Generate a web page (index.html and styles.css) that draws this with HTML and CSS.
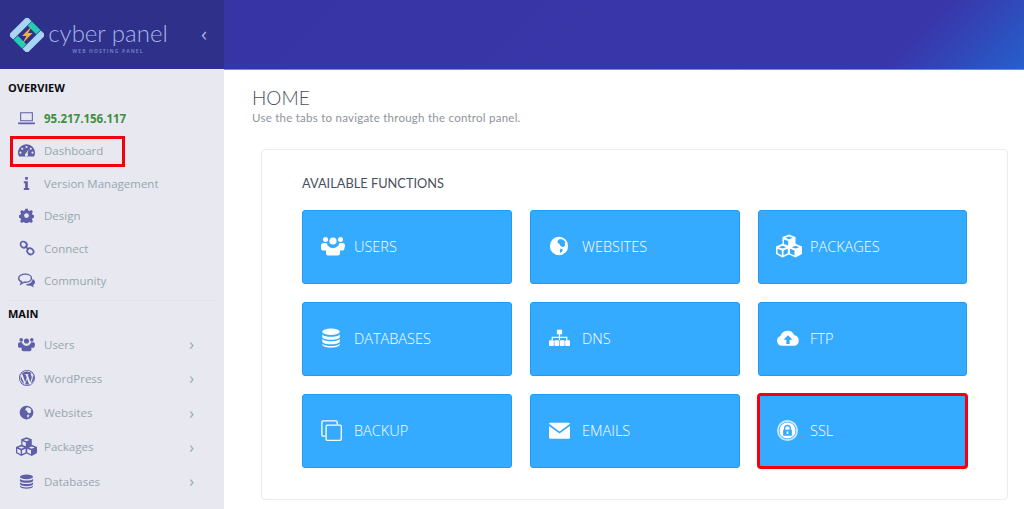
FILE: index.html
```html
<!DOCTYPE html>
<html lang="en">
<head>
<meta charset="utf-8">
<title>CyberPanel</title>
<link rel="stylesheet" href="styles.css">
</head>
<body>
<svg class="defs" width="0" height="0" aria-hidden="true">
  <defs>
    <symbol id="i-laptop" viewBox="0 0 24 20"><path fill-rule="evenodd" d="M3 1h18v13H3zM4.500 2.500v10h15v-10zM0 15.500h24v1.200q0 1.300-1.500 1.300h-21q-1.500 0-1.500-1.300z"/></symbol>
    <symbol id="i-gauge" viewBox="0 0 24 20"><path fill-rule="evenodd" d="M12 1C5.400 1 0 6.300 0 13q0 3 1.500 5.500h21Q24 16 24 13C24 6.300 18.600 1 12 1zM12 3.500a1.500 1.500 0 1 1 0 3 1.500 1.500 0 0 1 0-3zM6 6a1.500 1.500 0 1 1 0 3 1.500 1.500 0 0 1 0-3zM18 6a1.500 1.500 0 1 1 0 3 1.500 1.500 0 0 1 0-3zM3.500 11.500a1.500 1.500 0 1 1 0 3 1.500 1.500 0 0 1 0-3zM20.500 11.500a1.500 1.500 0 1 1 0 3 1.500 1.500 0 0 1 0-3zM15 8.500l-1.500 5.800a2.200 2.200 0 1 1-2.200-.5z"/></symbol>
    <symbol id="i-info" viewBox="0 0 24 24"><path d="M9.500 0h5v5h-5zM7 8h7.500v12.500H17V24H7v-3.500h2.500V11.500H7z"/></symbol>
    <symbol id="i-gear" viewBox="0 0 24 24"><path fill-rule="evenodd" d="M10 1h4l.7 3 2.200.9 2.600-1.600 2.800 2.800-1.600 2.600.9 2.200 3 .7v4l-3 .7-.9 2.200 1.600 2.600-2.800 2.800-2.600-1.600-2.200.9-.7 3h-4l-.7-3-2.200-.9-2.600 1.600-2.800-2.800 1.600-2.600-.9-2.200-3-.7v-4l3-.7.9-2.200-1.600-2.600 2.800-2.800 2.600 1.600 2.200-.9zM12 8.200a3.800 3.800 0 1 0 0 7.600 3.800 3.800 0 0 0 0-7.600z"/></symbol>
    <symbol id="i-link" viewBox="0 0 24 24"><g fill="none" stroke="currentColor" stroke-width="2.600"><ellipse cx="7" cy="7" rx="5" ry="4.300" transform="rotate(40 7 7)"/><ellipse cx="17" cy="17" rx="5" ry="4.300" transform="rotate(40 17 17)"/><path d="M9 9l5.500 5.500"/></g></symbol>
    <symbol id="i-chat" viewBox="0 0 24 22"><g fill="none" stroke="currentColor" stroke-width="2"><path d="M10 2c5 0 9 2.400 9 5.700s-4 5.800-9 5.800l-1.500-.1L4 16l1-3.300C2.500 11.700 1 10 1 7.700 1 4.400 5 2 10 2z"/></g><path d="M20.500 9c2 1 3.500 2.600 3.500 4.500 0 1.600-1 3-2.700 4l.9 3.500-5-2.800q-4 .3-6.700-1.700c5 0 10-2.500 10-7.500z"/></symbol>
    <symbol id="i-users" viewBox="0 0 24 20"><circle cx="12" cy="5" r="3.600"/><circle cx="4.500" cy="3.500" r="2.500"/><circle cx="19.500" cy="3.500" r="2.500"/><path d="M0 10q0-3 2.500-3h3q1 3 3 4-3 1-3.500 3.500H1.500Q0 14 0 12zM24 10q0-3-2.500-3h-3q-1 3-3 4 3 1 3.500 3.500h3q1.500-.5 1.500-2.500z"/><path d="M7.500 10.500q2 1.500 4.500 1.500t4.500-1.500q2.500.5 2.500 4V17q0 2.500-2.500 2.500h-9Q5 19.500 5 17v-2.500q0-4 2.500-4z"/></symbol>
    <symbol id="i-globe" viewBox="0 0 24 24"><path fill-rule="evenodd" d="M12 1a11 11 0 1 0 0 22 11 11 0 0 0 0-22zM13 3.500c3 .2 5.500 1.700 7 4l-1.200 1.200.7 2.300-2.500 2.500-3.300-1.500-1-2.500-2.700-1.500.8-2.500zM14 15l2.500 1-.8 3-2.200 1.500-.5-3.500z"/></symbol>
    <symbol id="i-wp" viewBox="0 0 24 24"><path fill-rule="evenodd" d="M12 0a12 12 0 1 0 0 24 12 12 0 0 0 0-24zM12 1.300a10.700 10.700 0 1 1 0 21.400 10.700 10.700 0 0 1 0-21.400zM12 2.300a9.700 9.700 0 0 0-8.200 4.500h1.500l4 11.500 2.300-6.800-1.700-4.700H8.500V6h6v.8h-1.500l4 11.400 1.300-4.400c1.500-4.500.2-5-.5-6.300-.6-1-.2-2.400 1-2.500A9.700 9.700 0 0 0 12 2.300zM2.700 9a9.700 9.700 0 0 0 5.300 11.800zM12.100 13.500l-2.800 7.800a9.700 9.700 0 0 0 5.800-.1zM20.800 8q.4 3.500-1 7l-2.700 7.500A9.700 9.700 0 0 0 20.800 8z"/></symbol>
    <symbol id="i-cubes" viewBox="0 0 26 24"><path fill-rule="evenodd" d="M13 0l6.500 2.500v6.800L26 12v7.500L19.500 23 13 20 6.500 23 0 19.500V12l6.500-2.700V2.500zM13 2L9.300 3.300 13 4.800l3.700-1.500zM8 5v4.400l4.200 1.600V6.500zM6.500 11.300L2.800 12.700l3.700 1.400 3.700-1.400zM19.500 11.300l-3.700 1.400 3.700 1.400 3.700-1.400zM1.500 14.200v4.400l4.300 2.300v-5zM14 14.200v4.700l4.500 2v-5zM7.500 16v4.800l4.300-2.100v-4.500z"/></symbol>
    <symbol id="i-db" viewBox="0 0 24 24"><ellipse cx="12" cy="4.500" rx="10.500" ry="3.800"/><path d="M1.500 7.500C3 10 8 10.500 12 10.500s9-.5 10.500-3V11c-1.500 2.500-6.500 3-10.500 3S3 13.500 1.500 11zM1.500 13C3 15.500 8 16 12 16s9-.5 10.500-3v3.500C21 19 16 19.500 12 19.500S3 19 1.500 16.500zM1.500 18.500C3 21 8 21.500 12 21.500s9-.5 10.500-3v1.500c-1 2.500-6 3.500-10.500 3.500S2.500 22.500 1.500 20z"/></symbol>
    <symbol id="i-sitemap" viewBox="0 0 24 20"><path d="M9 0h6v5h-6zM11.300 5h1.400v3H21v4h-1.400V9.300h-6.900V12h-1.400V9.300H4.400V12H3V8h8.300z"/><rect y="12" width="5.500" height="6.500" rx="1"/><rect x="6.200" y="12" width="5.500" height="6.500" rx="1"/><rect x="12.400" y="12" width="5.500" height="6.500" rx="1"/><rect x="18.500" y="12" width="5.500" height="6.500" rx="1"/></symbol>
    <symbol id="i-cloud" viewBox="0 0 24 18"><path fill-rule="evenodd" d="M5.500 17.500A5.500 5.500 0 0 1 3.800 6.800 8 8 0 0 1 18.800 6a5.800 5.800 0 0 1-.3 11.500zM12 6l-5 5h3.200v4.500h3.600V11H17z"/></symbol>
    <symbol id="i-copy" viewBox="0 0 24 24"><path fill="none" stroke="currentColor" stroke-width="1.500" d="M5 18.500H2.500A1.500 1.500 0 0 1 1 17V2.500A1.500 1.500 0 0 1 2.500 1H17a1.500 1.500 0 0 1 1.500 1.500V5"/><rect x="5.800" y="5.800" width="17.400" height="17.400" rx="1.500" fill="none" stroke="currentColor" stroke-width="1.500"/></symbol>
    <symbol id="i-mail" viewBox="0 0 24 20"><path d="M1.500 1h21q1.300 0 1.500 1.300L12 11 0 2.300Q.2 1 1.500 1zM0 4.800L12 13.500 24 4.800V18q0 1.500-1.500 1.500h-21Q0 19.500 0 18z"/></symbol>
    <symbol id="i-lock" viewBox="0 0 24 24"><path fill-rule="evenodd" d="M12 0a12 12 0 1 0 0 24 12 12 0 0 0 0-24zM12 2a10 10 0 1 1 0 20 10 10 0 0 1 0-20z" opacity=".75"/><path fill-rule="evenodd" d="M12 2.800a9.200 9.200 0 1 0 0 18.400 9.200 9.200 0 0 0 0-18.400zM12 5.500a4 4 0 0 1 4 4V11h1v7H7v-7h1V9.500a4 4 0 0 1 4-4zM12 7a2.500 2.500 0 0 0-2.500 2.500V11h5V9.500A2.500 2.500 0 0 0 12 7zM11 13v3h2v-3z"/></symbol>
  </defs>
</svg>

<div class="page">
  <aside class="sidebar">
    <div class="brand">
      <svg class="logo" viewBox="0 0 34 34" aria-hidden="true">
        <g transform="rotate(45 17 17)">
          <rect class="logo-blue" x="4" y="4" width="6.500" height="26"/>
          <rect class="logo-blue" x="23.500" y="4" width="6.500" height="26"/>
          <rect class="logo-teal" x="11" y="4" width="12" height="6"/>
          <rect class="logo-teal" x="11" y="24" width="12" height="6"/>
        </g>
        <path class="logo-bolt" d="M22 8l-10 10h4.500L12 26l10.500-11H18z"/>
      </svg>
      <div class="wordmark">
        <span class="wordmark-name">cyber panel</span>
        <span class="wordmark-sub">WEB HOSTING PANEL</span>
      </div>
      <span class="collapse">&#8249;</span>
    </div>

    <h4 class="section-title first">OVERVIEW</h4>
    <ul class="nav nav-overview">
      <li class="nav-item ip"><svg class="nav-icon"><use href="#i-laptop"/></svg><span>95.217.156.117</span></li>
      <li class="nav-item"><svg class="nav-icon"><use href="#i-gauge"/></svg><span>Dashboard</span></li>
      <li class="nav-item"><svg class="nav-icon nav-icon-xs"><use href="#i-info"/></svg><span>Version Management</span></li>
      <li class="nav-item"><svg class="nav-icon nav-icon-sm"><use href="#i-gear"/></svg><span>Design</span></li>
      <li class="nav-item"><svg class="nav-icon nav-icon-md"><use href="#i-link"/></svg><span>Connect</span></li>
      <li class="nav-item"><svg class="nav-icon"><use href="#i-chat"/></svg><span>Community</span></li>
    </ul>
    <hr class="divider">
    <h4 class="section-title">MAIN</h4>
    <ul class="nav nav-main">
      <li class="nav-item"><svg class="nav-icon"><use href="#i-users"/></svg><span>Users</span><i class="chev">&#8250;</i></li>
      <li class="nav-item"><svg class="nav-icon nav-icon-md"><use href="#i-wp"/></svg><span>WordPress</span><i class="chev">&#8250;</i></li>
      <li class="nav-item"><svg class="nav-icon nav-icon-sm"><use href="#i-globe"/></svg><span>Websites</span><i class="chev">&#8250;</i></li>
      <li class="nav-item"><svg class="nav-icon nav-icon-lg"><use href="#i-cubes"/></svg><span>Packages</span><i class="chev">&#8250;</i></li>
      <li class="nav-item"><svg class="nav-icon nav-icon-sm"><use href="#i-db"/></svg><span>Databases</span><i class="chev">&#8250;</i></li>
    </ul>
    <div class="mark mark-dashboard"></div>
  </aside>

  <div class="main">
    <header class="topbar"></header>
    <section class="content">
      <h1 class="page-title">HOME</h1>
      <p class="page-sub">Use the tabs to navigate through the control panel.</p>
      <div class="panel">
        <h2 class="panel-title">AVAILABLE FUNCTIONS</h2>
        <div class="tiles">
          <a class="tile"><svg class="tile-icon tile-icon-users"><use href="#i-users"/></svg><span>USERS</span></a>
          <a class="tile"><svg class="tile-icon tile-icon-sm"><use href="#i-globe"/></svg><span>WEBSITES</span></a>
          <a class="tile"><svg class="tile-icon tile-icon-lg"><use href="#i-cubes"/></svg><span>PACKAGES</span></a>
          <a class="tile"><svg class="tile-icon tile-icon-sm"><use href="#i-db"/></svg><span>DATABASES</span></a>
          <a class="tile"><svg class="tile-icon"><use href="#i-sitemap"/></svg><span>DNS</span></a>
          <a class="tile"><svg class="tile-icon tile-icon-cloud"><use href="#i-cloud"/></svg><span>FTP</span></a>
          <a class="tile"><svg class="tile-icon"><use href="#i-copy"/></svg><span>BACKUP</span></a>
          <a class="tile"><svg class="tile-icon"><use href="#i-mail"/></svg><span>EMAILS</span></a>
          <a class="tile tile-marked"><svg class="tile-icon"><use href="#i-lock"/></svg><span>SSL</span></a>
        </div>
      </div>
    </section>
  </div>
</div>
</body>
</html>
```

FILE: styles.css
```css
* { box-sizing: border-box; }
html, body { margin: 0; padding: 0; height: 509px; overflow: hidden; background: #fff; }
body { font-family: "Open Sans", "Liberation Sans", sans-serif; }
.defs { display: block; height: 0; }
ul { list-style: none; margin: 0; padding: 0; }

.page { display: flex; height: 509px; overflow: hidden; }

.sidebar { position: relative; flex: 0 0 224px; background: #e8e9f0; }
.brand { display: flex; align-items: flex-start; height: 69px; background: #2f308a; padding: 18px 0 0 10px; }
.logo { flex: 0 0 34px; width: 34px; height: 34px; margin-right: 5px; }
.logo-blue { fill: #a9d4f2; }
.logo-teal { fill: #22cdb0; }
.logo-bolt { fill: #f0b429; }
.wordmark { display: flex; flex-direction: column; align-items: center; width: 118px; }
.wordmark-name { font-family: Lato, sans-serif; font-weight: 300; font-size: 24px; line-height: 30px; color: #a3b8e8; white-space: nowrap; }
.wordmark-sub { font-weight: 700; font-size: 5px; line-height: 6px; letter-spacing: 1.100px; color: #6f7cc4; white-space: nowrap; }
.collapse { margin-left: 34px; margin-top: 1px; font-size: 20px; line-height: 30px; color: #a3b0dc; }

.section-title { margin: 0; padding-left: 8px; font-size: 11px; line-height: 14px; font-weight: 700; color: #0b0b0f; }
.section-title.first { padding-top: 12px; height: 26px; }
.nav-overview { margin-top: 7px; }
.nav-item { display: grid; grid-template-columns: 21px 1fr auto; column-gap: 7px; align-items: center; padding-left: 16px; font-size: 11.500px; color: #97a6ae; white-space: nowrap; }
.nav-overview .nav-item { height: 32.500px; }
.nav-main { margin-top: 6px; }
.nav-main .nav-item { height: 34.250px; }
.nav-item.ip { font-weight: 700; color: #3f8f3f; }
.nav-icon { width: 17px; height: 17px; justify-self: center; color: #5f5ea8; fill: currentColor; overflow: visible; }
.nav-icon-xs { width: 13px; height: 13px; }
.nav-icon-sm { width: 15px; height: 15px; }
.nav-icon-md { width: 16px; height: 16px; }
.nav-icon-lg { width: 21px; height: 20px; }
.chev { margin-right: 30px; font-style: normal; font-size: 16px; line-height: 16px; color: #97a6ae; }
.divider { border: 0; border-top: 1px solid #e1e2ea; margin: 3px 8px 6px; }
.mark { position: absolute; border: 3px solid #f5000e; }
.mark-dashboard { left: 10px; top: 136px; width: 115px; height: 31px; }

.main { flex: 1; display: flex; flex-direction: column; min-width: 0; }
.topbar { flex: 0 0 70px; border-bottom: 1px solid #6f8be0; background: linear-gradient(135deg, #3735a5 0%, #3936aa 84%, #2560cc 100%); }
.content { padding: 17px 16px 0 28px; }
.page-title { margin: 0 0 2px; font-family: Lato, sans-serif; font-weight: 300; font-size: 19px; line-height: 22px; color: #4a4f5c; }
.page-sub { margin: 0; font-family: Lato, sans-serif; font-size: 11.500px; line-height: 13px; letter-spacing: .25px; color: #8e939c; }
.panel { margin: 25px 0 0 9px; height: 351px; padding: 25px 40px 0; border: 1px solid #e8ecf3; border-radius: 4px; background: #fff; }
.panel-title { margin: 0 0 19px; font-family: Lato, sans-serif; font-weight: 400; font-size: 12.800px; line-height: 16px; color: #4a4f5c; }
.tiles { display: grid; grid-template-columns: 210px 210px 209px; grid-auto-rows: 74px; gap: 18px; }
.tile { display: grid; grid-template-columns: 33px auto; align-items: center; justify-content: start; padding: 0 0 2px 18px; border: 1px solid #1f9bf5; border-radius: 3px; background: #35abff; color: #fff; font-size: 14.500px; font-weight: 300; }
.tile-icon { width: 21px; height: 21px; fill: currentColor; color: #fff; overflow: visible; }
.tile-icon-users { width: 24px; height: 24px; }
.tile-icon-sm { width: 20px; height: 20px; }
.tile-icon-lg { width: 26px; height: 25px; margin-left: -1px; }
.tile-icon-cloud { width: 22px; height: 22px; }
.tile-marked { outline: 3px solid #f5000e; outline-offset: -2px; }
```
